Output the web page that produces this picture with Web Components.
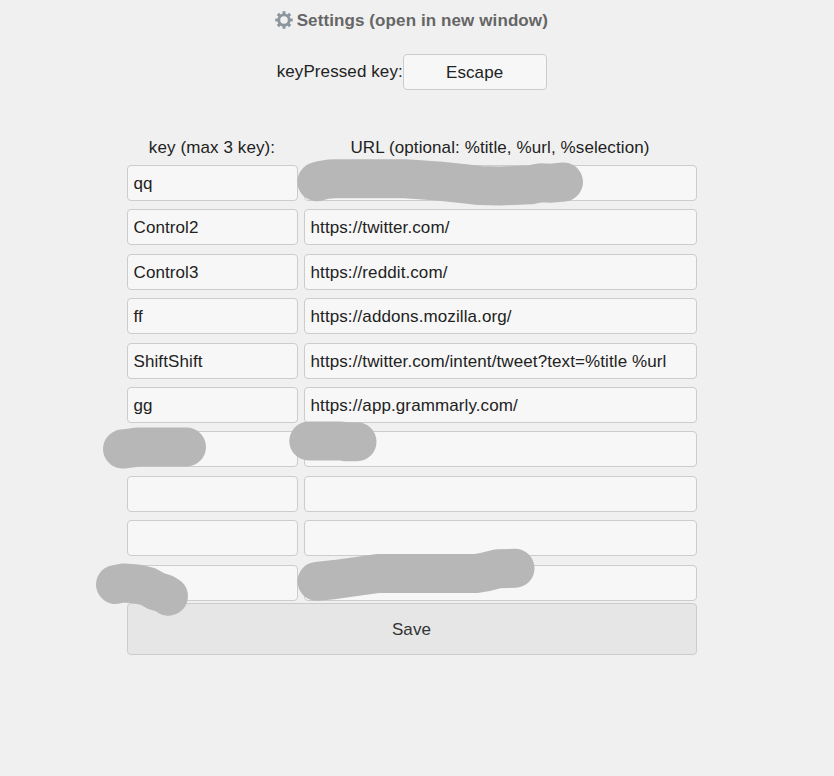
<!DOCTYPE html>
<html lang="en">
<head>
<meta charset="utf-8">
<title>Settings</title>
<style>
html, body { margin: 0; height: 100%; background: #f0f0f0; overflow: hidden; }
body { font: 17px/20px "Liberation Sans", Arial, sans-serif; letter-spacing: .1px; color: #222; }
</style>
</head>
<body>
<settings-page></settings-page>
<script>
const define = (name, html, setup) => customElements.define(name, class extends HTMLElement {
  connectedCallback() {
    if (this.shadowRoot) return;
    const t = document.createElement('template');
    t.innerHTML = html;
    this.attachShadow({ mode: 'open' }).append(t.content.cloneNode(true));
    if (setup) setup(this);
  }
});

define('gear-icon', `
<style>:host{display:block;width:18px;height:18px;margin-top:-2px} svg{display:block}</style>
<svg width="18" height="18" viewBox="0 0 18 18">
  <g fill="none" stroke="#8c969e">
    <circle cx="9" cy="9" r="5.2" stroke-width="2.8"/>
    <path stroke-width="3" d="M9 .3V3.3M9 14.7V17.7M.3 9H3.3M14.7 9H17.7M2.85 2.85L4.9 4.9M13.1 13.1L15.15 15.15M2.85 15.15L4.9 13.1M13.1 4.9L15.15 2.85"/>
  </g>
</svg>`);

define('settings-link', `
<style>
:host{display:flex;justify-content:center;align-items:center;gap:4px;height:20px;padding-right:1.4px;font-weight:bold;color:#666}
</style>
<gear-icon></gear-icon><span><slot></slot></span>`);

define('text-box', `
<style>
:host{display:flex;align-items:center;box-sizing:border-box;height:36px;padding:1.9px 6px 0 5.5px;border:1px solid #ccc;border-radius:4px;background:#f7f7f7;white-space:nowrap}
:host([center]){justify-content:center}
</style>
<slot></slot>`);

define('save-button', `
<style>
:host{display:flex;align-items:center;justify-content:center;box-sizing:border-box;height:52px;padding:2px 1px 0 0;border:1px solid #ccc;border-radius:4px;background:#e6e6e6;color:#333}
</style>
<slot></slot>`);

define('shortcut-row', `
<style>
:host{display:grid;grid-template-columns:171px 393px;column-gap:6px;height:36px}
</style>
<text-box></text-box><text-box></text-box>`, el => {
  const [key, url] = el.shadowRoot.querySelectorAll('text-box');
  key.textContent = el.getAttribute('key') || '';
  url.textContent = el.getAttribute('url') || '';
});

define('redaction-marks', `
<style>:host{position:absolute;left:0;top:0;width:834px;height:776px;pointer-events:none} svg{display:block}</style>
<svg width="834" height="776" viewBox="0 0 834 776" fill="none" stroke="#b7b7b7" stroke-width="39" stroke-linecap="round" stroke-linejoin="round">
  <path d="M316.8 181.8Q325 179 335 178.8H405L438 181L462 183.5L480 185.5L500 186L530 184.8L540 182.8L552 183.2L563.5 182"/>
  <path d="M122.5 449L130 448.2L137 447H186.5"/>
  <path d="M308.8 441H341L347 441.8H357"/>
  <path d="M115.5 584.5L123 583L137 584L148 586.5L156 591L164 593.5L168.5 596.2"/>
  <path d="M317 581.3L335 579.5L378 573.5H476L485 572L498 568.8L515 568.3"/>
</svg>`);

define('settings-page', `
<style>
:host{display:block;position:relative;height:776px}
main{display:flex;flex-direction:column;width:570px;margin-left:127px;padding-top:11px}
.trigger{display:flex;justify-content:center;align-items:center;height:36px;margin-top:23px}
.trigger span{margin-left:-.5px}
.trigger text-box{width:144px}
.heads{display:grid;grid-template-columns:170px 392px;column-gap:7px;text-align:center;margin-top:48px;height:27px}
.rows{display:flex;flex-direction:column;gap:8.4px}
save-button{margin-top:2.4px}
</style>
<main>
  <settings-link>Settings (open in new window)</settings-link>
  <div class="trigger"><span>keyPressed key:</span><text-box center>Escape</text-box></div>
  <div class="heads"><span>key (max 3 key):</span><span>URL (optional: %title, %url, %selection)</span></div>
  <div class="rows">
    <shortcut-row key="qq"></shortcut-row>
    <shortcut-row key="Control2" url="https://twitter.com/"></shortcut-row>
    <shortcut-row key="Control3" url="https://reddit.com/"></shortcut-row>
    <shortcut-row key="ff" url="https://addons.mozilla.org/"></shortcut-row>
    <shortcut-row key="ShiftShift" url="https://twitter.com/intent/tweet?text=%title %url"></shortcut-row>
    <shortcut-row key="gg" url="https://app.grammarly.com/"></shortcut-row>
    <shortcut-row></shortcut-row>
    <shortcut-row></shortcut-row>
    <shortcut-row></shortcut-row>
    <shortcut-row></shortcut-row>
  </div>
  <save-button>Save</save-button>
</main>
<redaction-marks></redaction-marks>`);
</script>
</body>
</html>
